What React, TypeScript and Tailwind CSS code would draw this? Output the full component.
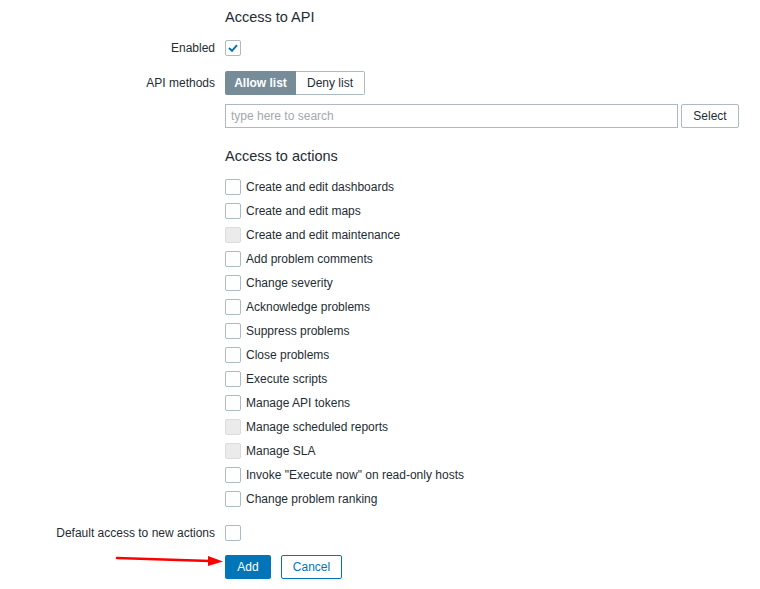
import React from "react";

const actions = [
  { label: "Create and edit dashboards", disabled: false },
  { label: "Create and edit maps", disabled: false },
  { label: "Create and edit maintenance", disabled: true },
  { label: "Add problem comments", disabled: false },
  { label: "Change severity", disabled: false },
  { label: "Acknowledge problems", disabled: false },
  { label: "Suppress problems", disabled: false },
  { label: "Close problems", disabled: false },
  { label: "Execute scripts", disabled: false },
  { label: "Manage API tokens", disabled: false },
  { label: "Manage scheduled reports", disabled: true },
  { label: "Manage SLA", disabled: true },
  { label: 'Invoke "Execute now" on read-only hosts', disabled: false },
  { label: "Change problem ranking", disabled: false },
];

function Checkbox({ checked = false, disabled = false }: { checked?: boolean; disabled?: boolean }) {
  return (
    <span
      className={`flex h-4 w-4 shrink-0 items-center justify-center rounded-[2px] border ${
        disabled ? "border-[#dcdcdc] bg-[#ebebeb]" : "border-[#acbbc2] bg-white"
      }`}
    >
      {checked && (
        <svg width="10" height="8" viewBox="0 0 10 8">
          <path d="M1 4 L4 6.8 L9 1.2" fill="none" stroke="#0275b8" strokeWidth="2" />
        </svg>
      )}
    </span>
  );
}

function Row({ label, children, className = "" }: { label?: string; children: React.ReactNode; className?: string }) {
  return (
    <div className={`grid grid-cols-[215px_1fr] gap-x-[10px] ${className}`}>
      <div className="flex items-center justify-end">{label}</div>
      <div className="flex items-center">{children}</div>
    </div>
  );
}

export default function App() {
  return (
    <div
      className="relative h-[589px] w-[760px] bg-white pr-[21px] pt-[6px] text-[12px] text-[#1f2c33]"
      style={{ fontFamily: "Arial, 'Liberation Sans', sans-serif" }}
    >
      <Row className="h-6">
        <span className="text-[14.5px]">Access to API</span>
      </Row>

      <Row label="Enabled" className="mt-[6px] h-6">
        <Checkbox checked />
      </Row>

      <Row label="API methods" className="mt-[11px] h-6">
        <div className="flex h-[24px]">
          <span className="flex w-[71px] items-center justify-center rounded-l-[2px] bg-[#768d99] font-bold text-white">
            Allow list
          </span>
          <span className="flex w-[69px] items-center justify-center rounded-r-[2px] border border-l-0 border-[#acbbc2] bg-white">
            Deny list
          </span>
        </div>
      </Row>

      <Row className="mt-[9px] h-6">
        <div className="flex w-full gap-[3px]">
          <div className="flex h-[24px] flex-1 items-center border border-[#acbbc2] px-[5px] text-[#9fa9ae]">
            type here to search
          </div>
          <button className="h-[24px] w-[58px] rounded-[2px] border border-[#acbbc2] bg-white text-[#1f2c33]">
            Select
          </button>
        </div>
      </Row>

      <Row className="mt-[17px] h-6">
        <span className="text-[14.5px]">Access to actions</span>
      </Row>

      <div className="mt-[6px]">
        {actions.map((a) => (
          <Row key={a.label} className="h-6">
            <label className="flex items-center gap-[5px]">
              <Checkbox disabled={a.disabled} />
              <span>{a.label}</span>
            </label>
          </Row>
        ))}
      </div>

      <Row label="Default access to new actions" className="mt-[10px] h-6">
        <Checkbox />
      </Row>

      <Row className="mt-[10px] h-6">
        <div className="flex gap-[10px]">
          <button className="h-[24px] w-[46px] rounded-[2px] bg-[#0275b8] text-white">Add</button>
          <button className="h-[24px] w-[61px] rounded-[2px] border border-[#0275b8] bg-white text-[#0275b8]">
            Cancel
          </button>
        </div>
      </Row>

      {/* annotation arrow */}
      <svg className="absolute left-[110px] top-[548px]" width="120" height="22" viewBox="0 0 120 22">
        <line x1="7" y1="10" x2="100" y2="13" stroke="#ff0000" strokeWidth="2.5" strokeLinecap="round" />
        <polygon points="98,8 113,13.4 98,18" fill="#ff0000" />
      </svg>
    </div>
  );
}
